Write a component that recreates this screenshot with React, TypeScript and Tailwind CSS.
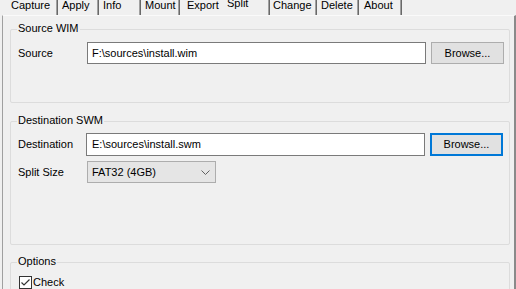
import React from "react";

const tabs = [
  { name: "Capture", w: 55, pl: 8, sep: true },
  { name: "Apply", w: 41, pl: 4, sep: true },
  { name: "Info", w: 42, pl: 4, sep: true },
  { name: "Mount", w: 39, pl: 4, sep: true },
  { name: "Export", w: 43, pl: 7, sep: false },
  { name: "Split", w: 47, pl: 4, sep: true, sel: true },
  { name: "Change", w: 47, pl: 3, sep: true },
  { name: "Delete", w: 42, pl: 4, sep: true },
  { name: "About", w: 43, pl: 5, sep: true },
];

function Group({ title, className, children }: { title: string; className: string; children?: React.ReactNode }) {
  return (
    <div className={"relative ml-[7px] w-[500px] rounded-[2px] border border-[#dcdcdc] " + className}>
      <div className="absolute left-[6px] top-[-8px] bg-[#f0f0f0] px-[1px] leading-[13px]">{title}</div>
      {children}
    </div>
  );
}

export default function App() {
  return (
    <div
      className="relative h-[289px] w-[516px] overflow-hidden bg-[#f0f0f0] text-[11px] leading-[13px] text-black"
      style={{ fontFamily: '"Liberation Sans", Arial, sans-serif' }}
    >
      <div className="flex h-[15px] pl-[3px]">
        {tabs.map((t) => (
          <div
            key={t.name}
            className={
              "h-[15px] shrink-0 " +
              (t.sep ? "shadow-[inset_-1px_0_0_#696969,inset_-2px_0_0_#a0a0a0] " : "") +
              (t.sel ? "" : "")
            }
            style={{ width: t.w, paddingLeft: t.pl }}
          >
            <div className={t.sel ? "-mt-[3px]" : "-mt-[1px]"}>{t.name}</div>
          </div>
        ))}
      </div>
      <div className="ml-[2px] h-[300px] w-[514px] border-l border-r-2 border-t border-l-[#a0a0a0] border-r-[#8a8a8a] border-t-[#fafafa] pt-[13px]">
        <Group title="Source WIM" className="h-[74px]">
          <div className="flex items-center pl-[7px] pt-[12px]">
            <div className="w-[69px]">Source</div>
            <div className="flex h-[22px] w-[339px] items-center border border-[#7a7a7a] bg-white pl-[4px]">
              F:\sources\install.wim
            </div>
            <div className="ml-[5px] flex h-[22px] w-[73px] items-center justify-center border border-[#adadad] bg-[#e1e1e1]">
              Browse...
            </div>
          </div>
        </Group>
        <Group title="Destination SWM" className="mt-[18px] h-[124px]">
          <div className="flex items-center pl-[7px] pt-[11px]">
            <div className="w-[68px]">Destination</div>
            <div className="flex h-[23px] w-[339px] items-center border border-[#7a7a7a] bg-white pl-[5px]">
              E:\sources\install.swm
            </div>
            <div className="ml-[5px] flex h-[23px] w-[73px] items-center justify-center border-2 border-[#0078d7] bg-[#e1e1e1]">
              Browse...
            </div>
          </div>
          <div className="mt-[5px] flex items-center pl-[7px]">
            <div className="w-[69px]">Split Size</div>
            <div className="flex h-[22px] w-[129px] items-center justify-between border border-[#adadad] bg-[#e5e5e5] pl-[4px] pr-[5px]">
              <span>FAT32 (4GB)</span>
              <svg width="9" height="5" viewBox="0 0 9 5" fill="none">
                <path d="M0.5 0.5 L4.5 4.5 L8.5 0.5" stroke="#606060" strokeWidth="1" />
              </svg>
            </div>
          </div>
        </Group>
        <Group title="Options" className="mt-[17px] h-[60px]">
          <div className="flex items-center pl-[8px] pt-[13px]">
            <div className="flex h-[13px] w-[13px] items-center justify-center border border-[#333333] bg-white">
              <svg width="11" height="11" viewBox="0 0 11 11" fill="none">
                <path d="M1.5 5.5 L4 8 L9.5 2.5" stroke="#333333" strokeWidth="1.2" />
              </svg>
            </div>
            <div className="ml-[1px]">Check</div>
          </div>
        </Group>
      </div>
    </div>
  );
}
